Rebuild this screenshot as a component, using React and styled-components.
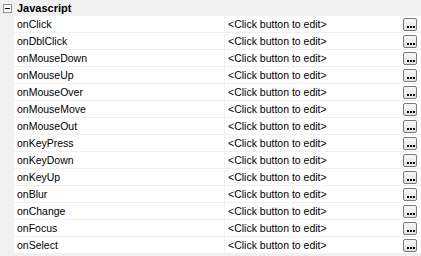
import React from 'react';
import styled, { createGlobalStyle } from 'styled-components';

const GlobalStyle = createGlobalStyle`
	html, body {
		margin: 0;
		padding: 0;
		background: #f0f0f0;
	}
	body {
		font-family: "Liberation Sans", Arial, sans-serif;
		font-size: 10.5px;
		color: #000;
	}
`;

const Grid = styled.div`
	width: 421px;
	height: 256px;
	overflow: hidden;
	background: #f0f0f0;
`;

const Category = styled.div`
	height: 16px;
	display: flex;
	align-items: center;
	padding-left: 3px;
`;

const Toggle = styled.div`
	width: 7px;
	height: 7px;
	border: 1px solid #8f8f8f;
	background: #fff;
	position: relative;
	margin-right: 5px;

	&::after {
		content: '';
		position: absolute;
		left: 1px;
		top: 3px;
		width: 5px;
		height: 1px;
		background: #000;
	}
`;

const CategoryName = styled.span`
	font-weight: bold;
	font-size: 11px;
	line-height: 16px;
`;

const Rows = styled.div`
	padding-left: 14px;
	display: flex;
	flex-direction: column;
	gap: 1px;
`;

const Row = styled.div`
	display: grid;
	grid-template-columns: 210px 1fr;
	column-gap: 1px;
	height: 16px;
`;

const NameCell = styled.div`
	background: #fff;
	padding-left: 3px;
	line-height: 16px;
	white-space: nowrap;
`;

const ValueCell = styled.div`
	background: #fff;
	padding-left: 3px;
	padding-right: 4px;
	display: flex;
	align-items: center;
	justify-content: space-between;
	line-height: 16px;
	white-space: nowrap;
`;

const EditButton = styled.div`
	width: 12px;
	height: 11px;
	border: 1px solid #7a7a7a;
	border-radius: 2px;
	background: linear-gradient(#f8f8f8, #e2e2e2);
	position: relative;

	&::after {
		content: '';
		position: absolute;
		left: 3px;
		bottom: 2px;
		width: 2px;
		height: 2px;
		background: #000;
		box-shadow: 3px 0 0 #000, 6px 0 0 #000;
	}
`;

const events = [
	'onClick',
	'onDblClick',
	'onMouseDown',
	'onMouseUp',
	'onMouseOver',
	'onMouseMove',
	'onMouseOut',
	'onKeyPress',
	'onKeyDown',
	'onKeyUp',
	'onBlur',
	'onChange',
	'onFocus',
	'onSelect',
];

export default function App() {
	return (
		<Grid>
			<GlobalStyle />
			<Category>
				<Toggle />
				<CategoryName>Javascript</CategoryName>
			</Category>
			<Rows>
				{events.map((name) => (
					<Row key={name}>
						<NameCell>{name}</NameCell>
						<ValueCell>
							<span>&lt;Click button to edit&gt;</span>
							<EditButton />
						</ValueCell>
					</Row>
				))}
			</Rows>
		</Grid>
	);
}
